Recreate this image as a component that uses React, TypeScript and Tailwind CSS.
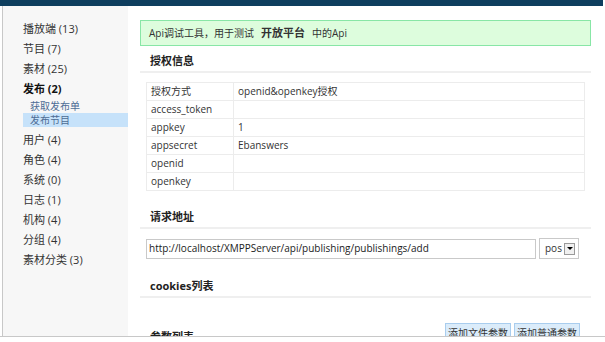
import React from "react";

const menu = [
  { label: "播放端 (13)" },
  { label: "节目 (7)" },
  { label: "素材 (25)" },
  { label: "发布 (2)", bold: true },
];

const menu2 = ["用户 (4)", "角色 (4)", "系统 (0)", "日志 (1)", "机构 (4)", "分组 (4)", "素材分类 (3)"];

const authRows: [string, string][] = [
  ["授权方式", "openid&openkey授权"],
  ["access_token", ""],
  ["appkey", "1"],
  ["appsecret", "Ebanswers"],
  ["openid", ""],
  ["openkey", ""],
];

function SectionTitle({ children }: { children: React.ReactNode }) {
  return (
    <div className="flex h-[22px] items-center border-b-2 border-[#efefef] pl-[10px] text-[11px] font-bold text-[#222]">
      {children}
    </div>
  );
}

export default function App() {
  return (
    <div
      className="h-[342px] w-[605px] overflow-hidden bg-white"
      style={{ fontFamily: '"Open Sans", "Noto Sans CJK SC", sans-serif' }}
    >
      <div className="flex h-[337px] flex-col overflow-hidden border-b border-[#c8c8c8]">
        <div className="h-[6px] w-[603px] shrink-0 bg-[#0e3e5e]" />
        <div className="ml-[2px] flex flex-1 overflow-hidden border-l border-[#c8c8c8]">
          <aside className="w-[125px] shrink-0 bg-[#f7f7f7] pt-[13px] text-[11px] text-[#333]">
            {menu.map((m) => (
              <div key={m.label} className={`flex h-[20px] items-center pl-[20px] ${m.bold ? "font-bold text-[#111]" : ""}`}>
                {m.label}
              </div>
            ))}
            <div className="flex h-[14px] items-center pl-[27px] text-[10px] text-[#4d6c95]">获取发布单</div>
            <div className="ml-[20px] flex h-[14px] items-center bg-[#c6e2fa] pl-[7px] text-[10px] text-[#4d6c95]">
              发布节目
            </div>
            <div className="h-[3px]" />
            {menu2.map((m) => (
              <div key={m} className="flex h-[20px] items-center pl-[20px]">
                {m}
              </div>
            ))}
          </aside>

          <main className="min-w-0 flex-1 pl-[12px] pr-[14px] pt-[14px] text-[#333]">
            <div className="flex h-[26px] items-center border border-[#88e6a6] bg-[#ddfddd] pl-[8px] text-[10px]">
              <span>Api调试工具，用于测试</span>
              <span className="mx-[7px] text-[11px] font-bold">开放平台</span>
              <span>中的Api</span>
            </div>

            <div className="mt-[5px]">
              <SectionTitle>授权信息</SectionTitle>
            </div>

            <table className="mt-[9px] ml-[6px] w-[439px] border-collapse border border-[#e6e6e6] text-[10px]">
              <tbody>
                {authRows.map(([k, v]) => (
                  <tr key={k} className="h-[18px]">
                    <td className="w-[87px] border border-[#ececec] pl-[4px]">{k}</td>
                    <td className="border border-[#ececec] pl-[4px]">{v}</td>
                  </tr>
                ))}
              </tbody>
            </table>

            <div className="mt-[16px]">
              <SectionTitle>请求地址</SectionTitle>
            </div>

            <div className="mt-[9px] ml-[6px] flex items-center gap-[3px]">
              <div className="flex h-[20px] w-[390px] items-center border border-[#c9c9c9] pl-[2px] text-[10px] text-[#222]">
                http://localhost/XMPPServer/api/publishing/publishings/add
              </div>
              <div className="flex h-[21px] w-[40px] items-center justify-between border border-[#c9c9c9] pl-[5px] pr-[3px] text-[10px] text-[#333]">
                <span>pos</span>
                <span className="flex h-[12px] w-[11px] items-center justify-center border border-[#9a9a9a] bg-[#f0f0f0]">
                  <span className="h-0 w-0 border-x-[3px] border-t-[3px] border-x-transparent border-t-black" />
                </span>
              </div>
            </div>

            <div className="mt-[17px]">
              <SectionTitle>cookies列表</SectionTitle>
            </div>

            <div className="mt-[25px] flex h-[20px] items-center justify-between pl-[10px] pr-[11px]">
              <span className="mt-[8px] text-[11px] font-bold text-[#222]">参数列表</span>
              <div className="flex gap-[3px]">
                <button className="h-[20px] w-[66px] border border-[#a9cdee] bg-[#dbecfa] text-[10px] text-[#333]">
                  添加文件参数
                </button>
                <button className="h-[20px] w-[66px] border border-[#a9cdee] bg-[#dbecfa] text-[10px] text-[#333]">
                  添加普通参数
                </button>
              </div>
            </div>
          </main>
        </div>
      </div>
    </div>
  );
}
